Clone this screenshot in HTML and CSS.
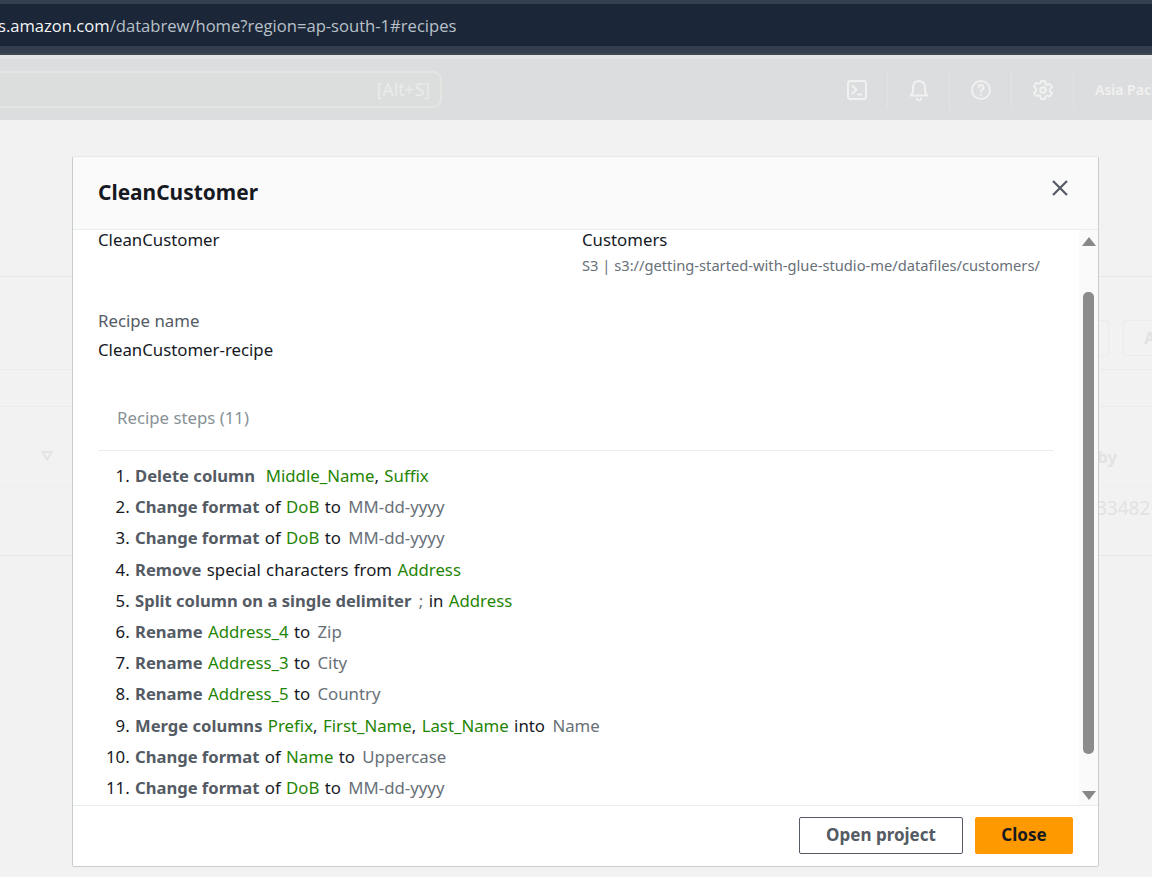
FILE: index.html
```html
<!DOCTYPE html>
<html lang="en">
<head>
    <meta charset="UTF-8">
    <meta name="viewport" content="width=device-width, initial-scale=1.0">
    <title>CleanCustomer recipe</title>
    <link rel="stylesheet" href="styles.css">
</head>
<body>
    <div class="browser-bar">
        <div class="url-bar">s.amazon.com<span class="url-rest">/databrew/home?region=ap-south-1#recipes</span></div>
    </div>

    <div class="nav">
        <div class="search"><span>[Alt+S]</span></div>
        <div class="nav-items">
            <div class="nav-icon">
                <svg width="22" height="22" viewBox="0 0 22 22" fill="none" stroke="currentColor" stroke-width="2" stroke-linejoin="round" stroke-linecap="round">
                    <rect x="2" y="2" width="18" height="18" rx="2.5"/>
                    <path d="M6.5 7l4 3.8-4 3.8M12 15.5h3.5"/>
                </svg>
            </div>
            <div class="nav-icon">
                <svg width="22" height="22" viewBox="0 0 22 22" fill="none" stroke="currentColor" stroke-width="2" stroke-linejoin="round" stroke-linecap="round">
                    <path d="M2.5 16.5c2-1.5 2.5-3 2.5-5.5V8a6 6 0 0 1 12 0v3c0 2.500.5 4 2.500 5.500z"/>
                    <path d="M9 19.500a2 2 0 0 0 4 0"/>
                </svg>
            </div>
            <div class="nav-icon">
                <svg width="22" height="22" viewBox="0 0 22 22" fill="none" stroke="currentColor" stroke-width="2" stroke-linecap="round">
                    <circle cx="11" cy="11" r="9"/>
                    <path d="M8.500 8.500a2.500 2.500 0 1 1 3.600 2.200c-.8.4-1.100 1-1.100 1.800"/>
                    <path d="M11 15.500v.2"/>
                </svg>
            </div>
            <div class="nav-icon">
                <svg width="22" height="22" viewBox="0 0 22 22" fill="none" stroke="currentColor" stroke-width="2" stroke-linejoin="round">
                    <path d="M9 2h4l.6 2.800 1.700 1 2.700-.9 2 3.400-2.100 1.900v2l2.100 1.900-2 3.400-2.700-.9-1.700 1L13 20H9l-.6-2.800-1.700-1-2.700.9-2-3.400 2.100-1.900v-2L2 7.300l2-3.400 2.700.9 1.700-1z"/>
                    <circle cx="11" cy="11" r="2.800"/>
                </svg>
            </div>
            <div class="nav-region">Asia Pacific</div>
        </div>
    </div>

    <div class="page">
        <div class="page-head"></div>
        <div class="page-tools">
            <div class="tool-btn"></div>
            <div class="tool-btn tool-btn-last">A</div>
        </div>
        <div class="page-filter"></div>
        <div class="table-head">
            <svg class="sort-icon" width="12" height="10" viewBox="0 0 12 10" fill="none" stroke="#e4e4e4" stroke-width="2">
                <path d="M1.500 1h9L6 8.500z"/>
            </svg>
            <div class="created-by">Created by</div>
        </div>
        <div class="table-row"><span class="owner">33482</span></div>
    </div>

    <div class="modal">
        <div class="modal-header">
            <h2>CleanCustomer</h2>
            <svg class="close-x" width="18" height="18" viewBox="0 0 18 18" fill="none" stroke="#545b64" stroke-width="2.200">
                <path d="M2 2l14 14M16 2L2 16"/>
            </svg>
        </div>

        <div class="modal-body">
            <div class="modal-content">
                <div class="summary">
                    <div class="summary-name">CleanCustomer</div>
                    <div>
                        <div>Customers</div>
                        <div class="source">S3 | s3://getting-started-with-glue-studio-me/datafiles/customers/</div>
                    </div>
                </div>

                <div class="field-label">Recipe name</div>
                <div class="field-value">CleanCustomer-recipe</div>

                <div class="steps-title">Recipe steps (11)</div>

                <ol class="steps">
                    <li><b>Delete column</b>&nbsp; <span class="col">Middle_Name</span>, <span class="col">Suffix</span></li>
                    <li><b>Change format</b> of <span class="col">DoB</span> to <span class="val">MM-dd-yyyy</span></li>
                    <li><b>Change format</b> of <span class="col">DoB</span> to <span class="val">MM-dd-yyyy</span></li>
                    <li><b>Remove</b> special characters from <span class="col">Address</span></li>
                    <li><b>Split column on a single delimiter</b> <span class="val">;</span> in <span class="col">Address</span></li>
                    <li><b>Rename</b> <span class="col">Address_4</span> to <span class="val">Zip</span></li>
                    <li><b>Rename</b> <span class="col">Address_3</span> to <span class="val">City</span></li>
                    <li><b>Rename</b> <span class="col">Address_5</span> to <span class="val">Country</span></li>
                    <li><b>Merge columns</b> <span class="col">Prefix</span>, <span class="col">First_Name</span>, <span class="col">Last_Name</span> into <span class="val">Name</span></li>
                    <li><b>Change format</b> of <span class="col">Name</span> to <span class="val">Uppercase</span></li>
                    <li><b>Change format</b> of <span class="col">DoB</span> to <span class="val">MM-dd-yyyy</span></li>
                </ol>
            </div>

            <div class="scrollbar">
                <div class="arrow-up"></div>
                <div class="thumb"></div>
                <div class="arrow-down"></div>
            </div>
        </div>

        <div class="modal-footer">
            <button class="btn btn-outline">Open project</button>
            <button class="btn btn-primary">Close</button>
        </div>
    </div>
</body>
</html>
```

FILE: styles.css
```css
body {
    margin: 0;
    height: 877px;
    overflow: hidden;
    background: #f2f2f2;
    font-family: "Noto Sans", "Open Sans", sans-serif;
    font-size: 16.8px;
    color: #16191f;
}

.browser-bar {
    height: 55px;
    box-sizing: border-box;
    padding-top: 4px;
    background: #333f4f;
    border-bottom: 2px solid #3f4853;
}

.url-bar {
    height: 42px;
    line-height: 44px;
    background: #1b2738;
    color: #f3f4f5;
    font-family: "Open Sans", sans-serif;
    font-size: 16.6px;
    text-indent: -2px;
    white-space: nowrap;
}

.url-rest {
    color: #b9c0c8;
}

.nav {
    height: 65px;
    box-sizing: border-box;
    display: flex;
    justify-content: space-between;
    align-items: center;
    background: #dcddde;
    border-top: 4px solid #e3e5e6;
    overflow: hidden;
}

.search {
    width: 452px;
    height: 37px;
    margin-left: -10px;
    box-sizing: border-box;
    border: 2px solid #e4e6e4;
    border-radius: 9px;
    background: #dcdedd;
    color: #eaebea;
    font-size: 17.5px;
    text-align: right;
    padding-right: 10px;
    line-height: 33px;
}

.nav-items {
    display: flex;
    align-items: center;
    color: #f1f1f1;
}

.nav-icon {
    width: 61px;
    height: 38px;
    display: flex;
    align-items: center;
    justify-content: center;
    border-right: 1px solid #e2e3e3;
}

.nav-region {
    width: 57px;
    margin-left: 21px;
    font-size: 14px;
    font-weight: 600;
    white-space: nowrap;
    overflow: hidden;
}

.page-head {
    height: 156px;
    border-bottom: 1px solid #e8e8e8;
}

.page-tools {
    height: 93px;
    display: flex;
    justify-content: flex-end;
    align-items: flex-start;
    gap: 15px;
    padding-top: 43px;
    box-sizing: border-box;
    border-bottom: 1px solid #ececec;
}

.tool-btn {
    width: 30px;
    height: 34px;
    border: 1px solid #ececec;
    border-radius: 2px;
    color: #e2e2e2;
    font-weight: 700;
    line-height: 34px;
    padding-left: 20px;
    margin-right: -1px;
}

.tool-btn-last {
    margin-right: -23px;
}

.page-filter {
    height: 36px;
    border-bottom: 1px solid #ececec;
}

.table-head {
    height: 81px;
    display: flex;
    align-items: center;
    border-bottom: 1px solid #efefef;
    padding-left: 41px;
    box-sizing: border-box;
    color: #e2e2e2;
    font-weight: 700;
}

.sort-icon {
    margin-top: 18px;
}

.created-by {
    margin-left: 974px;
    margin-top: 18px;
    white-space: nowrap;
}

.table-row {
    height: 68px;
    border-bottom: 1px solid #e8e8e8;
    color: #e2e2e2;
    padding: 7px 0 0 1096px;
    box-sizing: border-box;
    white-space: nowrap;
    font-size: 19px;
}

.modal {
    position: absolute;
    left: 73px;
    top: 157px;
    width: 1025px;
    height: 709px;
    display: flex;
    flex-direction: column;
    background: #fff;
    box-shadow: -1px 0 0 #c8cdd0, 1px 0 0 #c8cdd0, 0 1px 0 #c8cdd0, 0 -1px 0 #e6e8e9;
}

.modal-header {
    height: 73px;
    flex: none;
    box-sizing: border-box;
    display: flex;
    align-items: center;
    justify-content: space-between;
    padding: 0 29px 3px 25px;
    background: #fafafa;
    border-bottom: 1px solid #eaeded;
}

.modal-header h2 {
    margin: 0;
    font-size: 20.9px;
    font-weight: 700;
    color: #16191f;
}

.close-x {
    margin-top: -7px;
}

.modal-body {
    flex: 1;
    display: flex;
    min-height: 0;
    overflow: hidden;
}

.modal-content {
    flex: 1;
    padding: 0 25px;
    overflow: hidden;
}

.summary {
    display: grid;
    grid-template-columns: 484px 1fr;
    line-height: 21px;
    margin-top: -1px;
}

.source {
    margin-top: 5px;
    font-size: 14.7px;
    line-height: 20px;
    color: #687078;
}

.field-label {
    margin-top: 35px;
    line-height: 22px;
    color: #545b64;
}

.field-value {
    margin-top: 7px;
    line-height: 22px;
}

.steps-title {
    margin-top: 45px;
    padding: 0 0 20px 19px;
    line-height: 24px;
    color: #879196;
    border-bottom: 1px solid #eaeded;
}

.steps {
    margin: 9px 0 0;
    padding-left: 37px;
    word-spacing: 1px;
}

.steps li {
    height: 31.2px;
    line-height: 31.2px;
    white-space: nowrap;
}

.steps b {
    font-size: 16.6px;
    font-weight: 700;
    color: #545b64;
    word-spacing: 0;
}

.col {
    color: #1f8505;
}

.val {
    color: #687078;
    margin-left: 2px;
}

.scrollbar {
    width: 19px;
    flex: none;
    background: #fafafa;
    position: relative;
}

.arrow-up {
    position: absolute;
    left: 3px;
    top: 7px;
    border: 7px solid transparent;
    border-top: 0;
    border-bottom: 9px solid #888;
}

.thumb {
    position: absolute;
    left: 4px;
    top: 62px;
    width: 11px;
    height: 462px;
    border-radius: 5px;
    background: #8c8c8c;
}

.arrow-down {
    position: absolute;
    left: 3px;
    bottom: 5px;
    border: 7px solid transparent;
    border-bottom: 0;
    border-top: 9px solid #888;
}

.modal-footer {
    height: 61px;
    flex: none;
    box-sizing: border-box;
    display: flex;
    justify-content: flex-end;
    align-items: flex-start;
    gap: 12px;
    padding: 11px 25px 0 0;
    border-top: 1px solid #eaeded;
}

.btn {
    height: 37px;
    box-sizing: border-box;
    border-radius: 2px;
    padding-bottom: 3px;
    font-family: "Noto Sans", "Open Sans", sans-serif;
    font-size: 17px;
    font-weight: 700;
    cursor: pointer;
}

.btn-outline {
    width: 164px;
    background: #fff;
    border: 1px solid #545b64;
    color: #545b64;
}

.btn-primary {
    width: 98px;
    background: #ff9900;
    border: none;
    color: #16191f;
}
```
